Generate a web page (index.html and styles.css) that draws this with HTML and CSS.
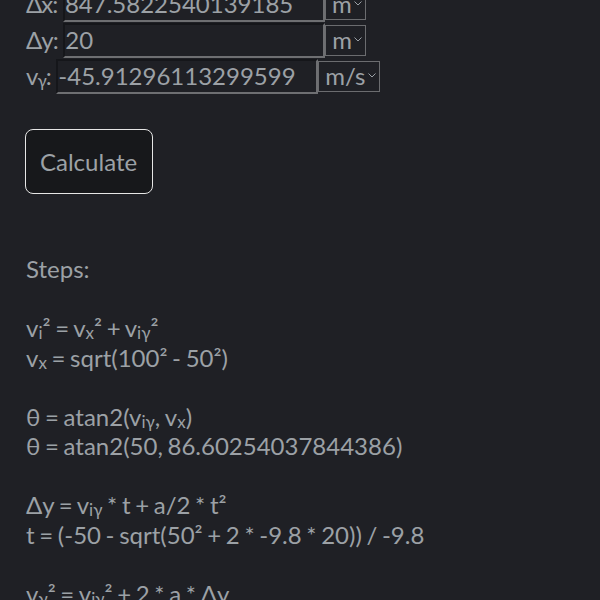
FILE: index.html
```html
<!DOCTYPE html>
<html lang="en">
<head>
<meta charset="utf-8">
<title>Projectile calculator</title>
<link rel="stylesheet" href="styles.css">
</head>
<body>
<main class="page">
  <div class="field">
    <label class="lbl">Δx:</label>
    <input class="num" type="text" value="847.5822540139185"><span class="unit"><select><option>m</option></select><svg class="chev" width="8" height="5" viewBox="0 0 8 5"><path d="M0.5 0.5 L4 4 L7.5 0.5" fill="none" stroke="#9aa0a6" stroke-width="1"/></svg></span>
  </div>
  <div class="field">
    <label class="lbl">Δy:</label>
    <input class="num" type="text" value="20"><span class="unit"><select><option>m</option></select><svg class="chev" width="8" height="5" viewBox="0 0 8 5"><path d="M0.5 0.5 L4 4 L7.5 0.5" fill="none" stroke="#9aa0a6" stroke-width="1"/></svg></span>
  </div>
  <div class="field">
    <label class="lbl lbl-sub">v<sub>γ</sub>:</label>
    <input class="num" type="text" value="-45.91296113299599"><span class="unit"><select><option>m/s</option></select><svg class="chev" width="8" height="5" viewBox="0 0 8 5"><path d="M0.5 0.5 L4 4 L7.5 0.5" fill="none" stroke="#9aa0a6" stroke-width="1"/></svg></span>
  </div>

  <button class="calc" type="button">Calculate</button>

  <div class="steps">
    <div class="line">Steps:</div>
    <div class="line"></div>
    <div class="line">v<sub>i</sub>² = v<sub>x</sub>² + v<sub>iγ</sub>²</div>
    <div class="line">v<sub>x</sub> = sqrt(100² - 50²)</div>
    <div class="line"></div>
    <div class="line">θ = atan2(v<sub>iγ</sub>, v<sub>x</sub>)</div>
    <div class="line">θ = atan2(50, 86.60254037844386)</div>
    <div class="line"></div>
    <div class="line">Δy = v<sub>iγ</sub> * t + a/2 * t²</div>
    <div class="line">t = (-50 - sqrt(50² + 2 * -9.8 * 20)) / -9.8</div>
    <div class="line"></div>
    <div class="line">v<sub>γ</sub>² = v<sub>iγ</sub>² + 2 * a * Δy</div>
  </div>
</main>
</body>
</html>
```

FILE: styles.css
```css
html, body {
  margin: 0;
  padding: 0;
  background: #1f2025;
  height: 100%;
  overflow: hidden;
}

body {
  font-family: Lato, "Noto Sans", sans-serif;
  font-size: 24px;
  color: #9ca1a6;
  word-spacing: -1.5px;
}

sub {
  font-size: 17px;
  line-height: 0;
  vertical-align: -2px;
}

.page {
  padding: 0 26px;
  margin-top: -14px;
}

.field {
  line-height: 36px;
  height: 36px;
  white-space: nowrap;
}

.lbl {
  color: #9ca1a6;
  letter-spacing: -1px;
  margin-right: 1px;
}

.lbl-sub {
  margin-right: 1px;
}

.num {
  font: inherit;
  letter-spacing: 0;
  color: #9ca1a6;
  background: transparent;
  box-sizing: border-box;
  width: 262px;
  height: 35px;
  padding: 1px 0;
  border: 2px solid;
  border-color: #15161a #6e6f72 #6e6f72 #15161a;
  margin: 0;
  vertical-align: baseline;
}

.unit {
  position: relative;
  display: inline-block;
  line-height: normal;
}

.unit select {
  appearance: none;
  -webkit-appearance: none;
  font: inherit;
  color: #9ca1a6;
  background: #1f2025;
  border: 1px solid #6b6c6f;
  border-radius: 0;
  box-sizing: border-box;
  height: 31px;
  line-height: 28px;
  padding: 0 13px 0 6px;
  margin: 0;
}

.chev {
  position: absolute;
  right: 4px;
  top: 50%;
  margin-top: -3px;
  pointer-events: none;
}

.calc {
  display: block;
  margin-top: 35px;
  margin-left: -1px;
  font: inherit;
  color: #9ca1a6;
  background: #17181b;
  border: 1.5px solid #e6e6e6;
  border-radius: 8px;
  padding: 17px 15px 17px 14px;
  cursor: pointer;
}

.steps {
  margin-top: 60px;
  line-height: 29.5px;
}

.line {
  height: 29.5px;
  white-space: nowrap;
}
```
